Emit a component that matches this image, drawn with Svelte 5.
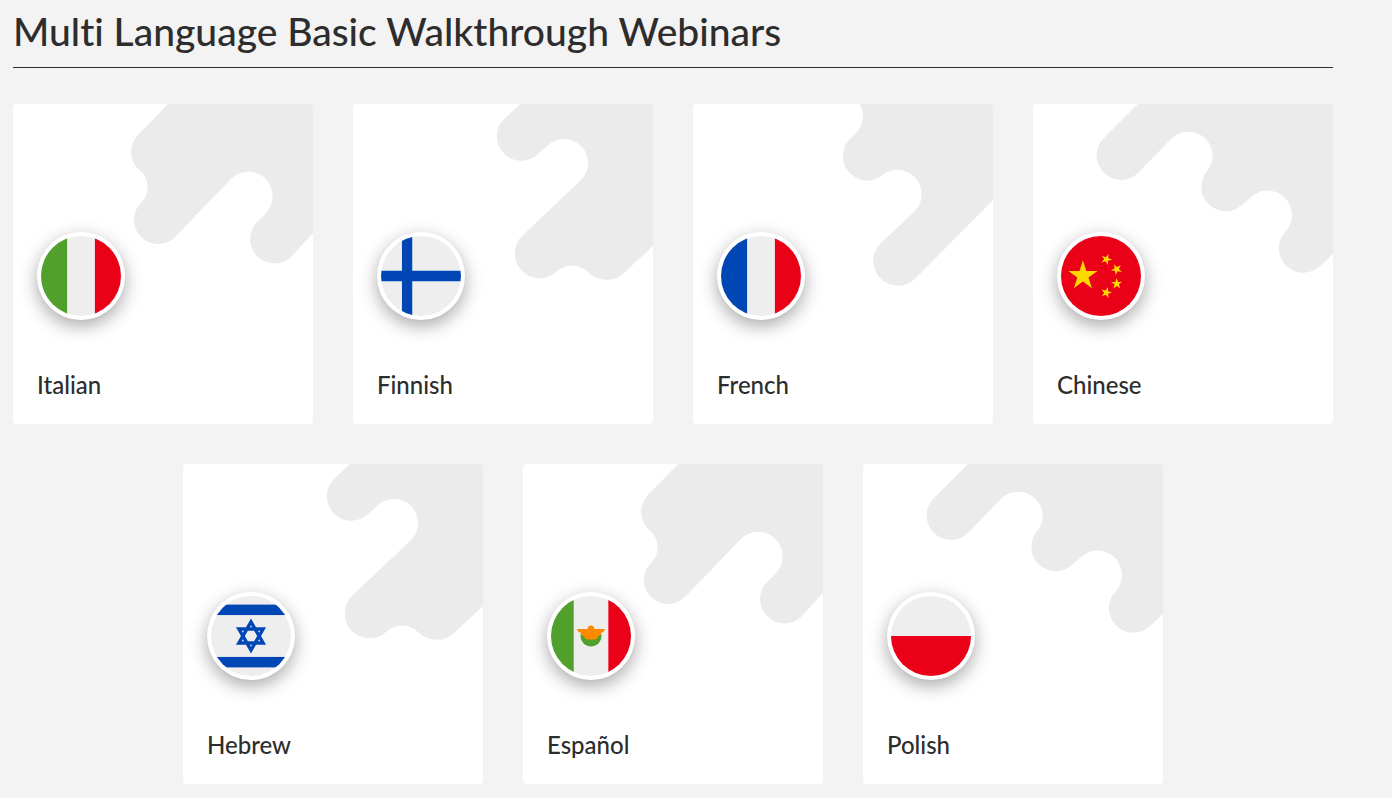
<script>
  const shapes = {
    left:
      'M155 0L125 31A24.4 24.4 0 0 0 125 65A22 22 0 0 1 128 99A24 24 0 0 0 162 133L218 75A24.4 24.4 0 0 1 253 109L244 118A24.2 24.2 0 0 0 279 152L300 129V0Z',
    hook:
      'M167 0L151 15A24.4 24.4 0 0 0 185 50L194 42A24 24 0 0 1 228 76L170 131A24.4 24.4 0 0 0 203 168A23 23 0 0 1 235 168A26 26 0 0 0 271 169L300 142V0Z',
    tail:
      'M167 0A24.4 24.4 0 0 1 164 28L156 36A24.4 24.4 0 0 0 187 73A24.4 24.4 0 0 1 222 107L188 139A24.4 24.4 0 0 0 222 175L300 96V0Z',
    steps:
      'M105 0L70 35A24.4 24.4 0 0 0 106 68L138 35A24.2 24.2 0 0 1 175 66A24.4 24.4 0 0 0 210 100L216 95A24.4 24.4 0 0 1 253 127A24.4 24.4 0 0 0 287 162L300 150V0Z'
  };

  const languages = [
    { name: 'Italian', flag: 'it', shape: shapes.left },
    { name: 'Finnish', flag: 'fi', shape: shapes.hook },
    { name: 'French', flag: 'fr', shape: shapes.tail },
    { name: 'Chinese', flag: 'cn', shape: shapes.steps },
    { name: 'Hebrew', flag: 'il', shape: shapes.hook },
    { name: 'Español', flag: 'mx', shape: shapes.left },
    { name: 'Polish', flag: 'pl', shape: shapes.steps }
  ];

  const green = '#50a02b';
  const red = '#ea0017';
  const blue = '#0047b5';
  const yellow = '#ffd800';
  const orange = '#ff8a00';
</script>

<section class="webinars">
  <h1>Multi Language Basic Walkthrough Webinars</h1>
  <div class="cards">
    {#each languages as lang (lang.name)}
      <a class="card" href="#{lang.flag}">
        <svg class="shape" viewBox="0 0 300 320" aria-hidden="true"><path d={lang.shape} /></svg>
        <span class="badge">
          <svg class="flag" viewBox="0 0 512 512" aria-hidden="true">
            <rect width="512" height="512" fill="#eee" />
            {#if lang.flag === 'it' || lang.flag === 'fr'}
              <rect width="167" height="512" fill={lang.flag === 'it' ? green : blue} />
              <rect x="345" width="167" height="512" fill={red} />
            {:else if lang.flag === 'fi'}
              <path d="M134 0H200V223H512V289H200V512H134V289H0V223H134Z" fill={blue} />
            {:else if lang.flag === 'cn'}
              <rect width="512" height="512" fill={red} />
              <g fill={yellow}>
                <path d="M140.2 155.8 162.3 223.8H233.8L175.9 265.9 198 333.9 140.2 291.9 82.3 333.9 104.4 265.9 46.5 223.8H118.1Z" />
                <path d="M303.5 396.3 286.6 375.5 261.6 385.2 276.1 362.7 259.2 341.9 285.1 348.8 299.7 326.3 301.1 353.2 327.1 360.1 302 369.8Z" />
                <path d="M335.2 335.6 343.1 310 321.3 294.4 348.1 294 356.2 268.3 364.8 293.7 391.6 293.3 370.2 309.4 378.9 334.8 357 319.3Z" />
                <path d="M382.3 187.7 369.9 211.5 389.1 230.3 362.7 226 350.4 249.8 345.8 223.4 319.3 219.1 343.1 206.6 338.4 180.1 357.6 198.8Z" />
                <path d="M304.2 114.7 302.2 141.5 327 151.6 301 158.3 299.1 185 284.9 162.3 258.9 168.9 276.1 148.4 261.9 125.6 286.7 135.7Z" />
              </g>
            {:else if lang.flag === 'il'}
              <g fill={blue}>
                <rect y="55" width="512" height="67" />
                <rect y="390" width="512" height="67" />
                <path
                  fill-rule="evenodd"
                  d="M352.4 200.3H288.1L256 144.7l-32.1 55.6h-64.3L191.7 256l-32.1 55.7h64.3L256 367.3l32.1-55.6h64.3L320.3 256zM295.5 256l-19.8 34.2h-39.4L216.5 256l19.8-34.2h39.4zM256 187.6l7.3 12.7h-14.7zM196.8 221.8h14.7l-7.4 12.7zM196.8 290.2l7.3-12.7 7.4 12.7zM256 324.4l-7.3-12.7h14.6zM315.2 290.2h-14.7l7.4-12.7zM300.5 221.8h14.7l-7.3 12.7z"
                />
              </g>
            {:else if lang.flag === 'mx'}
              <rect width="145" height="512" fill={green} />
              <rect x="367" width="145" height="512" fill={red} />
              <path d="M189.2 256c0 36.9 29.9 66.8 66.8 66.8s66.8-29.9 66.8-66.8v-11.1H189.2z" fill={green} />
              <path
                fill={orange}
                d="M345 211.5h-66.7c0-12.3-10-22.3-22.3-22.3s-22.3 10-22.3 22.3H167c0 12.3 10.7 22.2 23 22.2h-.8c0 12.3 10 22.3 22.3 22.3 0 12.3 10 22.3 22.2 22.3h44.6c12.3 0 22.2-10 22.2-22.3 12.3 0 22.3-10 22.3-22.3h-.8c12.3 0 23-9.9 23-22.2z"
              />
            {:else}
              <rect y="256" width="512" height="256" fill={red} />
            {/if}
          </svg>
        </span>
        <span class="name">{lang.name}</span>
      </a>
    {/each}
  </div>
</section>

<style>
  :global(body) {
    background: #f3f3f3;
  }

  .webinars {
    padding: 0 59px 14px 13px;
    color: #2d2d2d;
    font-family: Lato, "Liberation Sans", sans-serif;
    font-weight: 500;
    font-variant-ligatures: none;
  }

  h1 {
    margin: 0 0 36px;
    padding: 7px 0 12px;
    border-bottom: 1px solid #2d2d2d;
    font-size: 39px;
    font-weight: 500;
    line-height: 48px;
  }

  .cards {
    display: flex;
    flex-wrap: wrap;
    justify-content: center;
    gap: 40px;
  }

  .card {
    position: relative;
    display: flex;
    flex: 0 0 300px;
    flex-direction: column;
    align-items: flex-start;
    gap: 49px;
    box-sizing: border-box;
    padding: 128px 24px 23px;
    overflow: hidden;
    border-radius: 4px;
    background: #fff;
    color: inherit;
    text-decoration: none;
  }

  .shape {
    position: absolute;
    top: 0;
    right: 0;
    width: 300px;
    height: 320px;
    fill: #ebebeb;
  }

  .badge {
    position: relative;
    display: flex;
    padding: 4px;
    border-radius: 50%;
    background: #fff;
    box-shadow: 0 6px 18px rgba(0, 0, 0, 0.34);
  }

  .flag {
    width: 80px;
    height: 80px;
    border-radius: 50%;
  }

  .name {
    position: relative;
    font-size: 24px;
    line-height: 32px;
  }
</style>
